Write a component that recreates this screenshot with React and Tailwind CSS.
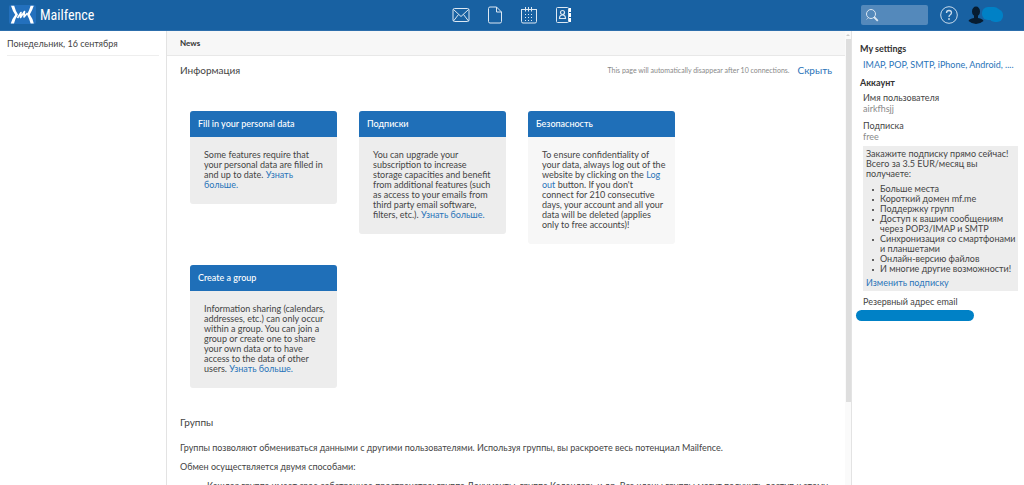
/**
 * Dashboard Page
 * Mail dashboard: news, getting-started cards and account details.
 */

const CARDS = [
  {
    title: 'Fill in your personal data',
    bg: 'bg-[#ededed]',
    body: <>Some features require that your personal data are filled in and up to date. <Link>Узнать больше.</Link></>,
  },
  {
    title: 'Подписки',
    bg: 'bg-[#ededed]',
    body: <>You can upgrade your subscription to increase storage capacities and benefit from additional features (such as access to your emails from third party email software, filters, etc.). <Link>Узнать больше.</Link></>,
  },
  {
    title: 'Безопасность',
    bg: 'bg-[#f7f7f7]',
    body: <>To ensure confidentiality of your data, always log out of the website by clicking on the <Link>Log out</Link> button. If you don't connect for 210 consecutive days, your account and all your data will be deleted (applies only to free accounts)!</>,
  },
  {
    title: 'Create a group',
    bg: 'bg-[#ededed]',
    body: <>Information sharing (calendars, addresses, etc.) can only occur within a group. You can join a group or create one to share your own data or to have access to the data of other users. <Link>Узнать больше.</Link></>,
  },
];

const FEATURES = [
  'Больше места',
  'Короткий домен mf.me',
  'Поддержку групп',
  'Доступ к вашим сообщениям через POP3/IMAP и SMTP',
  'Синхронизация со смартфонами и планшетами',
  'Онлайн-версию файлов',
  'И многие другие возможности!',
];

function Link({ children, className = '' }) {
  return <a href="#" className={`text-[#2a74b9] ${className}`}>{children}</a>;
}

function Bullet({ children }) {
  return (
    <li className="flex gap-[6px] before:content-[''] before:shrink-0 before:size-[2px] before:mt-[5px] before:rounded-full before:bg-[#333]">
      <span>{children}</span>
    </li>
  );
}

function Logo() {
  return (
    <svg viewBox="0 0 28 20" className="w-7 h-5" fill="none">
      <rect x="1" width="27" height="19" rx="2" fill="#2370bd" />
      <path d="M3 .8H6.200Q7.500 6 10 9.500Q7.500 13 6 18.500H2.800Q4.500 13 7.200 9.800Q4.500 6 3 .8Z" fill="#fff" />
      <path d="M25.800 .8H22.600Q21.500 5 19 9.500Q21 13 22.600 18.500H25.800Q24.500 13 21.800 9.500Q24.500 5 25.800 .8Z" fill="#fff" />
      <path d="M9.500 13L13 7.500L12.500 12.500L16.500 6.500L16 12L19.500 8" stroke="#fff" strokeWidth="1.600" strokeLinejoin="round" />
    </svg>
  );
}

function SearchIcon() {
  return (
    <svg viewBox="0 0 14 14" className="w-[14px] h-[14px] shrink-0" fill="none" stroke="#dce8f3">
      <circle cx="6" cy="6" r="4.500" />
      <path d="M9 9L12.800 12.800" strokeWidth="1.800" />
      <path d="M3.500 9.500L1.500 11.500" strokeWidth=".6" />
    </svg>
  );
}

function MailIcon() {
  return (
    <svg viewBox="0 0 18 16" className="w-[18px] h-4" fill="none" stroke="currentColor">
      <rect x="1" y="1.500" width="16" height="13" rx="1.500" />
      <path d="M1.500 2.500L9 9.500L16.500 2.500M1.500 14L6.500 7.500M16.500 14L11.500 7.500" />
    </svg>
  );
}

function FileIcon() {
  return (
    <svg viewBox="0 0 16 18" className="w-4 h-[18px]" fill="none" stroke="currentColor">
      <path d="M1.500 2.500Q1.500 1 3 1H9.500L14.500 6V15.500Q14.500 17 13 17H3Q1.500 17 1.500 15.500ZM9.500 1V6H14.500" />
    </svg>
  );
}

function CalendarIcon() {
  return (
    <svg viewBox="0 0 18 18" className="w-[18px] h-[18px]" fill="none" stroke="currentColor">
      <path d="M1.500 3.500V15.500Q1.500 17 3 17H15Q16.500 17 16.500 15.500V3.500M1 3.500H17M5.500 1V5.500M8.500 1V5.500M11.500 1V5.500" />
      <path d="M5 8.500H14M5 11.500H14M5 14.500H14" strokeDasharray="1 2" />
    </svg>
  );
}

function ContactsIcon() {
  return (
    <svg viewBox="0 0 17 18" className="w-[17px] h-[18px]" fill="none" stroke="currentColor">
      <rect x="1.500" y="1.500" width="12" height="15" rx="1" />
      <path d="M15 2V6M15 7V11M15 12V16" strokeWidth="2" stroke="#fff" />
      <circle cx="7.500" cy="6.500" r="2" strokeWidth="1.200" />
      <path d="M4.500 12.500Q4.500 9 7.500 9Q10.500 9 10.500 12.500Z" strokeWidth="1.200" />
    </svg>
  );
}

function HelpIcon() {
  return (
    <svg viewBox="0 0 18 18" className="w-[18px] h-[18px]" fill="none" stroke="currentColor">
      <circle cx="9" cy="9" r="8.300" />
      <path d="M6.500 7Q6.500 4.500 9 4.500Q11.500 4.500 11.500 6.800Q11.500 8 10 9Q9 9.600 9 11" strokeWidth="1.300" />
      <circle cx="9" cy="13" r=".9" fill="currentColor" stroke="none" />
    </svg>
  );
}

function UserIcon() {
  return (
    <svg viewBox="0 0 16 18" className="w-4 h-[18px]" fill="#071c30">
      <ellipse cx="8" cy="5.500" rx="4" ry="5" />
      <path d="M6 9H10V12Q15 13 15.500 15Q12 18 8 18Q4 18 .5 15Q1 13 6 12Z" />
    </svg>
  );
}

function Header() {
  const nav = [
    { label: 'Messages', icon: <MailIcon /> },
    { label: 'Documents', icon: <FileIcon /> },
    { label: 'Calendar', icon: <CalendarIcon /> },
    { label: 'Contacts', icon: <ContactsIcon /> },
  ];

  return (
    <header className="grid grid-cols-[1fr_auto_1fr] items-center h-[31px] shrink-0 bg-[#1861a2] border-b border-[#2c6eac] px-2">
      <a href="#" className="flex items-center gap-1 text-white">
        <Logo />
        <span className="font-['Roboto_Condensed','Open_Sans',sans-serif] text-[14px] leading-5">Mailfence</span>
      </a>
      <nav className="flex items-center gap-4 text-[#dce8f3]">
        {nav.map(n => (
          <button key={n.label} type="button" aria-label={n.label} className="flex items-center justify-center w-[18px]">{n.icon}</button>
        ))}
      </nav>
      <div className="flex items-center justify-end pr-3 text-[#c8dbec]">
        <label className="flex items-center w-[67px] h-5 px-1 rounded-xs bg-[#5489bb]">
          <SearchIcon />
          <input type="search" aria-label="Search" className="w-full min-w-0 outline-none text-[9px]" />
        </label>
        <button type="button" aria-label="Help" className="ml-3"><HelpIcon /></button>
        <button type="button" aria-label="Account" className="flex items-center ml-[10px]">
          <UserIcon />
          <svg viewBox="0 0 24 16" className="w-6 h-4 -ml-1" fill="#0081c6">
            <rect x="2" y="0" width="18" height="13" rx="6" />
            <rect x="9" y="2" width="14" height="13" rx="6" />
          </svg>
        </button>
      </div>
    </header>
  );
}

function Card({ title, bg, body }) {
  return (
    <article className={`rounded-[3px] overflow-hidden ${bg}`}>
      <h3 className="h-[26px] px-2 leading-[26px] font-medium text-white bg-[#1f6fb8]">{title}</h3>
      <p className="pl-[14px] pr-[9px] pt-[13px] pb-[14px]">{body}</p>
    </article>
  );
}

function Field({ label, value }) {
  return (
    <div>
      <dt>{label}</dt>
      <dd className="mt-px text-[#8a8a8a]">{value}</dd>
    </div>
  );
}

function AccountPanel() {
  return (
    <aside className="w-[173px] shrink-0 border-l border-[#e3e3e3] pl-2 pr-[6px] pt-[13px]">
      <h2 className="font-bold text-[#333]">My settings</h2>
      <Link className="block pl-[3px] mt-[6px]">IMAP, POP, SMTP, iPhone, Android, ....</Link>
      <h2 className="font-bold text-[#333] mt-2">Аккаунт</h2>
      <dl className="flex flex-col gap-[7px] pl-[3px] mt-[5px]">
        <Field label="Имя пользователя" value="airkfhsjj" />
        <Field label="Подписка" value="free" />
      </dl>
      <section className="ml-[3px] mt-1 pl-[3px] py-[3px] bg-[#ededed]">
        <p>Закажите подписку прямо сейчас! Всего за 3.5 EUR/месяц вы получаете:</p>
        <ul className="pl-[6px] mt-[5px] mb-1">
          {FEATURES.map(f => <Bullet key={f}>{f}</Bullet>)}
        </ul>
        <Link>Изменить подписку</Link>
      </section>
      <p className="pl-[3px] mt-[6px]">Резервный адрес email</p>
      <div className="w-[118px] h-[11px] -ml-1 mt-[3px] rounded-full bg-[#0081c6]" />
    </aside>
  );
}

export default function App() {
  return (
    <div className="flex flex-col h-screen overflow-hidden bg-white text-[#444] font-['Lato','Noto_Sans',sans-serif] text-[9px] leading-[10px]">
      <Header />
      <div className="flex flex-1 min-h-0">
        <aside className="w-[167px] shrink-0 border-r border-[#e3e3e3] px-[7px]">
          <p className="h-[25px] leading-[26px] border-b border-[#eee]">Понедельник, 16 сентября</p>
        </aside>

        <main className="flex-1 min-w-0 overflow-hidden">
          <h1 className="h-[25px] px-[13px] leading-6 font-bold text-[8px] text-[#333] bg-[#f7f7f7] border-b border-[#e8e8e8]">News</h1>
          <div className="px-[13px] pt-2">
            <div className="flex items-center">
              <h2 className="text-[10px] leading-3">Информация</h2>
              <span className="ml-auto text-[7px] text-[#888]">This page will automatically disappear after 10 connections.</span>
              <Link className="ml-2 text-[10px] leading-3">Скрыть</Link>
            </div>
            <div className="grid grid-cols-[repeat(auto-fill,147px)] items-start gap-x-[22px] gap-y-[21px] mt-[35px] pl-[10px] pr-[120px]">
              {CARDS.map(c => <Card key={c.title} {...c} />)}
            </div>
            <h2 className="mt-7 text-[10px] leading-3">Группы</h2>
            <p className="mt-[15px]">Группы позволяют обмениваться данными с другими пользователями. Используя группы, вы раскроете весь потенциал Mailfence.</p>
            <p className="mt-[9px]">Обмен осуществляется двумя способами:</p>
            <ul className="mt-[9px] pl-[19px]">
              <Bullet>Каждая группа имеет свое собственное пространство: группа Документы, группа Календарь и др. Все члены группы могут получить доступ к этому</Bullet>
            </ul>
          </div>
        </main>

        {/* scrollbar track */}
        <div className="flex flex-col items-center w-[6px] shrink-0 bg-[#fafafa]">
          <span className="my-[3px] border-x-2 border-b-2 border-x-transparent border-b-[#ccc]" />
          <div className="w-[5px] h-[80%] bg-[#dedede]" />
        </div>
        <AccountPanel />
      </div>
    </div>
  );
}
